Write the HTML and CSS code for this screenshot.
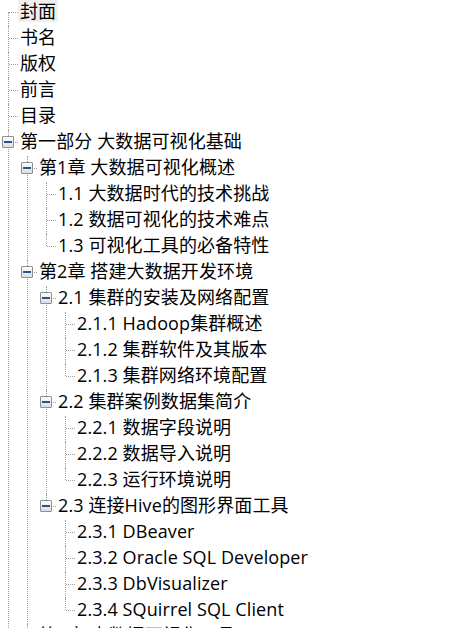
FILE: index.html
```
<!DOCTYPE html>
<html lang="zh-CN">
<head>
<meta charset="utf-8">
<title>目录</title>
<link rel="stylesheet" href="styles.css">
</head>
<body>
<ul class="tree">
  <li><div class="row"><span class="label selected">封面</span></div></li>
  <li><div class="row"><span class="label">书名</span></div></li>
  <li><div class="row"><span class="label">版权</span></div></li>
  <li><div class="row"><span class="label">前言</span></div></li>
  <li><div class="row"><span class="label">目录</span></div></li>
  <li><div class="row"><span class="toggle"></span><span class="label">第一部分 大数据可视化基础</span></div>
    <ul>
      <li><div class="row"><span class="toggle"></span><span class="label">第1章 大数据可视化概述</span></div>
        <ul>
          <li><div class="row"><span class="label">1.1 大数据时代的技术挑战</span></div></li>
          <li><div class="row"><span class="label">1.2 数据可视化的技术难点</span></div></li>
          <li><div class="row"><span class="label">1.3 可视化工具的必备特性</span></div></li>
        </ul>
      </li>
      <li><div class="row"><span class="toggle"></span><span class="label">第2章 搭建大数据开发环境</span></div>
        <ul>
          <li><div class="row"><span class="toggle"></span><span class="label">2.1 集群的安装及网络配置</span></div>
            <ul>
              <li><div class="row"><span class="label">2.1.1 Hadoop集群概述</span></div></li>
              <li><div class="row"><span class="label">2.1.2 集群软件及其版本</span></div></li>
              <li><div class="row"><span class="label">2.1.3 集群网络环境配置</span></div></li>
            </ul>
          </li>
          <li><div class="row"><span class="toggle"></span><span class="label">2.2 集群案例数据集简介</span></div>
            <ul>
              <li><div class="row"><span class="label">2.2.1 数据字段说明</span></div></li>
              <li><div class="row"><span class="label">2.2.2 数据导入说明</span></div></li>
              <li><div class="row"><span class="label">2.2.3 运行环境说明</span></div></li>
            </ul>
          </li>
          <li><div class="row"><span class="toggle"></span><span class="label">2.3 连接Hive的图形界面工具</span></div>
            <ul>
              <li><div class="row"><span class="label">2.3.1 DBeaver</span></div></li>
              <li><div class="row"><span class="label">2.3.2 Oracle SQL Developer</span></div></li>
              <li><div class="row"><span class="label">2.3.3 DbVisualizer</span></div></li>
              <li><div class="row"><span class="label">2.3.4 SQuirrel SQL Client</span></div></li>
            </ul>
          </li>
        </ul>
      </li>
      <li><div class="row"><span class="toggle"></span><span class="label">第3章 大数据可视化工具</span></div></li>
    </ul>
  </li>
  <li><div class="row"><span class="toggle"></span><span class="label">第二部分 大数据可视化实战</span></div></li>
</ul>
</body>
</html>
```

FILE: styles.css
```
html, body {
  margin: 0;
  padding: 0;
  background: #ffffff;
  overflow: hidden;
}

body {
  font-family: "Open Sans", "Noto Sans CJK SC", sans-serif;
  font-size: 18px;
  letter-spacing: 0.1px;
  color: #000000;
}

.tree,
.tree ul {
  list-style: none;
  margin: 0;
  padding: 0;
}

.tree ul {
  padding-left: 19px;
}

.tree li {
  position: relative;
}

/* vertical connector */
.tree li::before {
  content: "";
  position: absolute;
  left: 8px;
  top: 0;
  bottom: 0;
  border-left: 1px dotted #a0a0a0;
}

.tree li:last-child::before {
  bottom: auto;
  height: 12px;
}

.tree > li:first-child::before {
  top: 12px;
}

.row {
  position: relative;
  height: 26px;
  display: flex;
  align-items: flex-start;
}

/* horizontal connector */
.row::before {
  content: "";
  position: absolute;
  left: 9px;
  top: 12px;
  width: 9px;
  border-top: 1px dotted #a0a0a0;
}

.toggle {
  position: absolute;
  z-index: 1;
  left: 2px;
  top: 6px;
  width: 12px;
  height: 12px;
  box-sizing: border-box;
  border: 1px solid #8e8f8f;
  border-radius: 1px;
  background: linear-gradient(#ffffff, #dedede);
}

.toggle::after {
  content: "";
  position: absolute;
  left: 1px;
  top: 4px;
  width: 8px;
  height: 2px;
  background: #2d4f92;
}

.label {
  margin-left: 18px;
  padding: 0 2px;
  height: 22px;
  line-height: 22px;
  white-space: nowrap;
}

.selected {
  background: #efefef;
}
```
